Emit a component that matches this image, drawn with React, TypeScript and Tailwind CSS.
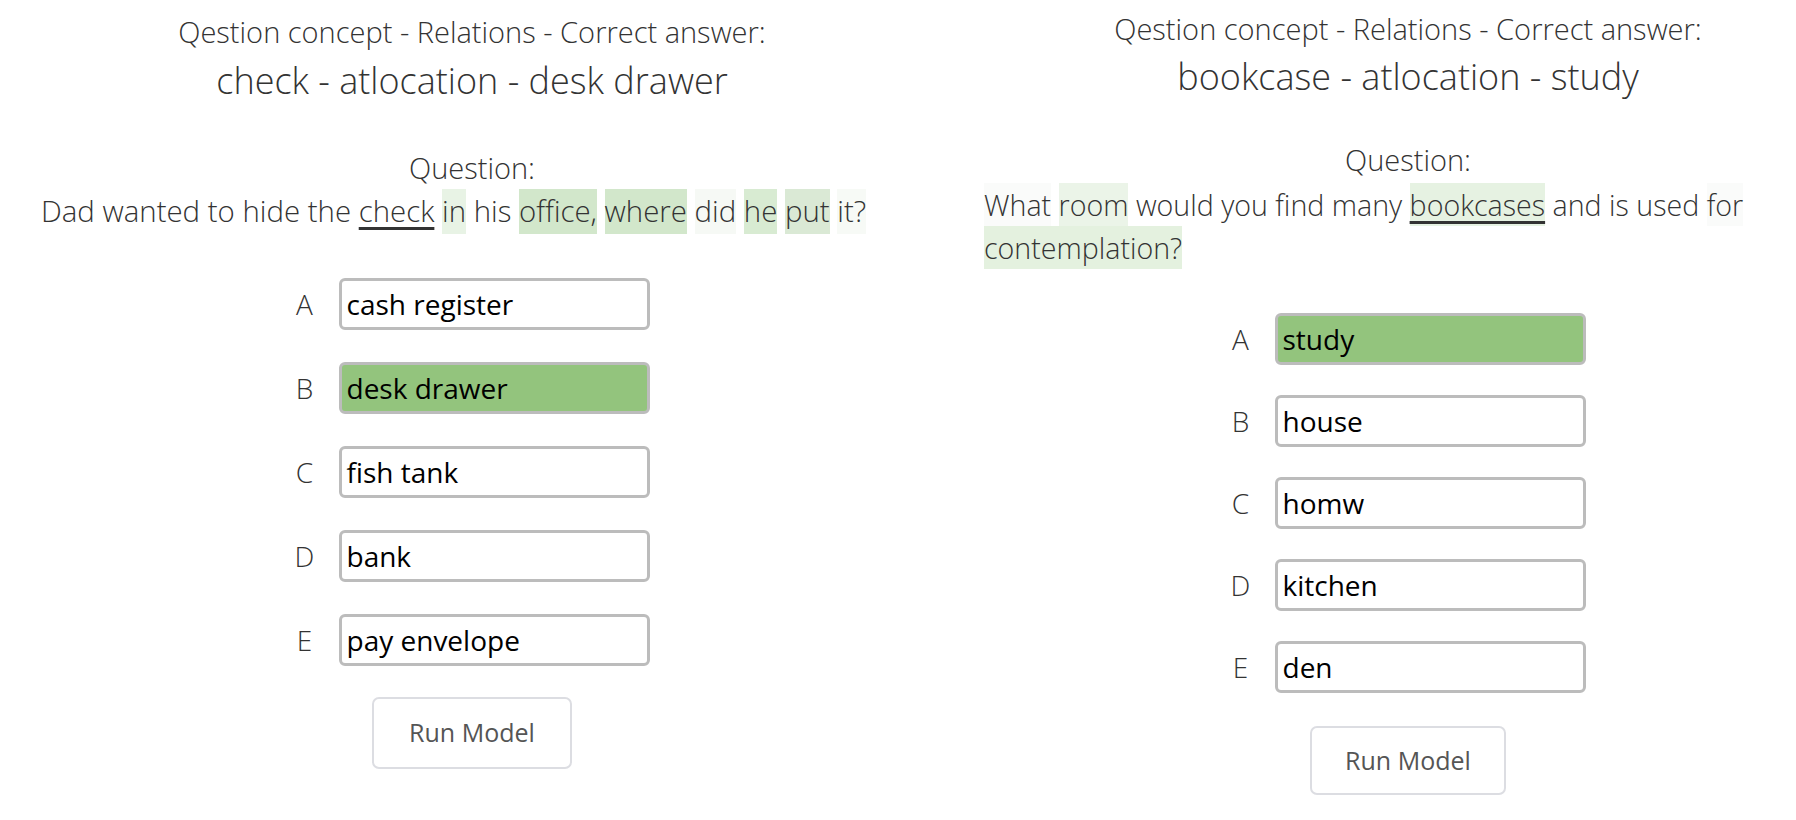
import React from "react";

type Word = { t: string; bg?: string; u?: boolean };

const leftWords: Word[] = [
  { t: "Dad" },
  { t: "wanted" },
  { t: "to" },
  { t: "hide" },
  { t: "the" },
  { t: "check", u: true },
  { t: "in", bg: "bg-[#e8f3e5]" },
  { t: "his" },
  { t: "office,", bg: "bg-[#d2e7cb]" },
  { t: "where", bg: "bg-[#d2e7cb]" },
  { t: "did", bg: "bg-[#f6f9f5]" },
  { t: "he", bg: "bg-[#d8ebd2]" },
  { t: "put", bg: "bg-[#dae9d5]" },
  { t: "it?", bg: "bg-[#f7faf6]" },
];

const rightWords: Word[] = [
  { t: "What", bg: "bg-[#fafbfa]" },
  { t: "room", bg: "bg-[#ebf4e8]" },
  { t: "would" },
  { t: "you" },
  { t: "find" },
  { t: "many" },
  { t: "bookcases", bg: "bg-[#e6f2e2]", u: true },
  { t: "and" },
  { t: "is" },
  { t: "used" },
  { t: "for", bg: "bg-[#fafbfa]" },
  { t: "contemplation?", bg: "bg-[#e4f1df]" },
];

function Question({ words, lh, size }: { words: Word[]; lh: string; size: string }) {
  return (
    <p className={`w-full text-left font-light text-[#333] ${size} ${lh}`}>
      {words.map((w, i) => (
        <React.Fragment key={i}>
          <span
            className={`${w.bg ?? ""} ${
              w.u ? "underline decoration-[3px] underline-offset-[5px] decoration-[#333]" : ""
            } inline-block`}
          >
            {w.t}
          </span>
          {i < words.length - 1 ? " " : ""}
        </React.Fragment>
      ))}
    </p>
  );
}

function Answer({ label, text, correct }: { label: string; text: string; correct?: boolean }) {
  return (
    <div className="flex items-center gap-[24px]">
      <span className="w-[20px] text-center text-[28px] font-light text-[#333]">{label}</span>
      <div
        className={`flex h-[52px] w-[311px] items-center rounded-[6px] border-[3px] border-[#bcbcbc] pl-[5px] text-[28px] text-black ${
          correct ? "bg-[#93c47d]" : "bg-white"
        }`}
      >
        {text}
      </div>
    </div>
  );
}

function RunButton({ cls }: { cls: string }) {
  return (
    <button
      className={`flex items-center justify-center rounded-[7px] border-2 border-[#dcdde2] bg-white text-[25px] text-[#555] ${cls}`}
    >
      Run Model
    </button>
  );
}

export default function App() {
  return (
    <div
      className="flex h-[820px] w-[1796px] overflow-hidden bg-white"
      style={{ fontFamily: "'Open Sans', Lato, sans-serif" }}
    >
      <div className="ml-[41px] flex w-[862px] shrink-0 flex-col items-center pt-[14px]">
        <div className="text-[29px] font-light leading-[36px] text-[#333]">
          Qestion concept - Relations - Correct answer:
        </div>
        <div className="mt-[9px] text-[36px] font-light leading-[44px] text-[#333]">
          check - atlocation - desk drawer
        </div>
        <div className="mt-[47px] text-[29px] font-light leading-[36px] text-[#333]">Question:</div>
        <div className="mt-[3px] w-full">
          <Question words={leftWords} lh="leading-[45px]" size="text-[29.4px]" />
        </div>
        <div className="mt-[44px] flex flex-col gap-[32px]">
          <Answer label="A" text="cash register" />
          <Answer label="B" text="desk drawer" correct />
          <Answer label="C" text="fish tank" />
          <Answer label="D" text="bank" />
          <Answer label="E" text="pay envelope" />
        </div>
        <RunButton cls="mt-[31px] h-[72px] w-[200px]" />
      </div>

      <div className="ml-[81px] flex w-[848px] shrink-0 flex-col items-center pt-[11px]">
        <div className="text-[29px] font-light leading-[36px] text-[#333]">
          Qestion concept - Relations - Correct answer:
        </div>
        <div className="mt-[8px] text-[36px] font-light leading-[44px] text-[#333]">
          bookcase - atlocation - study
        </div>
        <div className="mt-[43px] text-[29px] font-light leading-[36px] text-[#333]">Question:</div>
        <div className="mt-[5px] w-full">
          <Question words={rightWords} lh="leading-[43px]" size="text-[28.6px]" />
        </div>
        <div className="mt-[44px] flex flex-col gap-[30px]">
          <Answer label="A" text="study" correct />
          <Answer label="B" text="house" />
          <Answer label="C" text="homw" />
          <Answer label="D" text="kitchen" />
          <Answer label="E" text="den" />
        </div>
        <RunButton cls="mt-[33px] h-[69px] w-[196px]" />
      </div>
    </div>
  );
}
